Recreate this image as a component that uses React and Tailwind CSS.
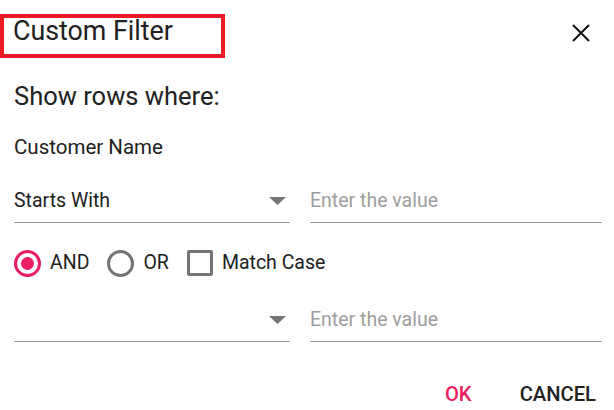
import { useState } from 'react';

const Arrow = () => (
  <svg width="17" height="8" viewBox="0 0 17 8" className="shrink-0 mt-[9px] mr-[4px]">
    <path d="M0 0 H17 L8.5 8 Z" fill="#757575" />
  </svg>
);

const Dropdown = ({ label }) => (
  <div className="flex items-start w-[276px] h-[35px] border-b border-[#9a9a9a]">
    <span className="flex-1 pt-[1px] text-[19.5px] leading-[24px] text-[#212121]">{label}</span>
    <Arrow />
  </div>
);

const ValueInput = () => (
  <div className="flex items-start flex-1 h-[35px] border-b border-[#9a9a9a]">
    <span className="pt-[1px] text-[19.5px] leading-[24px] text-[#9e9e9e]">Enter the value</span>
  </div>
);

const Radio = ({ checked }) => (
  <div
    className={
      checked
        ? 'flex items-center justify-center w-[27px] h-[27px] mt-[1px] rounded-full border-[3px] border-[#e91e63]'
        : 'w-[27px] h-[27px] mt-[1px] rounded-full border-[3px] border-[#757575]'
    }
  >
    {checked && <div className="w-[13px] h-[13px] rounded-full bg-[#e91e63]" />}
  </div>
);

export default function App() {
  const [logic] = useState('and');

  return (
    <div className="w-[614px] h-[410px] bg-white pt-[14px] overflow-hidden font-['Roboto',sans-serif] text-[#212121]">
      {/* header */}
      <div className="flex items-start justify-between pr-[24px]">
        <div className="w-[225px] h-[44px] border-4 border-[#ed1c24] pl-[9px]">
          <h1 className="text-[26.8px] leading-[27px] font-normal">Custom Filter</h1>
        </div>
        <svg width="18" height="18" viewBox="0 0 18 18" className="mt-[10px]">
          <path d="M1 1 L17 17 M17 1 L1 17" stroke="#111" strokeWidth="2" />
        </svg>
      </div>

      <div className="px-[14px] pr-[12px]">
        <p className="mt-[23px] text-[25.5px] leading-[30px]">Show rows where:</p>
        <p className="mt-[24px] text-[20.5px] leading-[24px]">Customer Name</p>

        <div className="flex gap-[20px] mt-[29px]">
          <Dropdown label="Starts With" />
          <ValueInput />
        </div>

        <div className="flex items-center h-[28px] mt-[26px] text-[19.5px] leading-[24px]">
          <Radio checked={logic === 'and'} />
          <span className="ml-[9px]">AND</span>
          <div className="ml-[18px]">
            <Radio checked={logic === 'or'} />
          </div>
          <span className="ml-[9px]">OR</span>
          <div className="ml-[18px] w-[26px] h-[26px] rounded-[2px] border-[3px] border-[#757575]" />
          <span className="ml-[9px]">Match Case</span>
        </div>

        <div className="flex gap-[20px] mt-[30px]">
          <Dropdown label="" />
          <ValueInput />
        </div>
      </div>

      <div className="flex justify-end gap-[48px] pr-[18px] mt-[40px] text-[20.2px] leading-[24px] font-medium">
        <button className="text-[#e91e63]">OK</button>
        <button className="text-[#212121]">CANCEL</button>
      </div>
    </div>
  );
}
